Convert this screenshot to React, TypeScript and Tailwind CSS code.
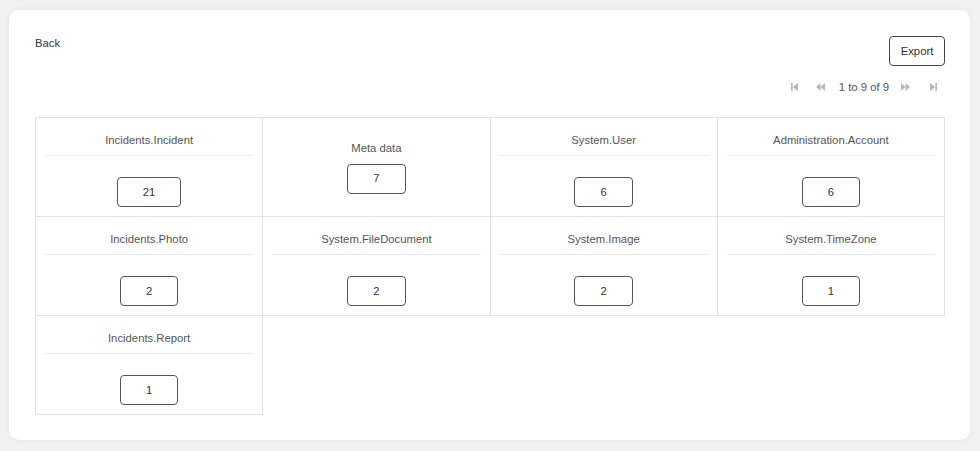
import React from 'react';

interface Stat {
  name: string;
  count: number;
  plain?: boolean;
}

const stats: Stat[] = [
  { name: 'Incidents.Incident', count: 21 },
  { name: 'Meta data', count: 7, plain: true },
  { name: 'System.User', count: 6 },
  { name: 'Administration.Account', count: 6 },
  { name: 'Incidents.Photo', count: 2 },
  { name: 'System.FileDocument', count: 2 },
  { name: 'System.Image', count: 2 },
  { name: 'System.TimeZone', count: 1 },
  { name: 'Incidents.Report', count: 1 },
];

const PagerIcon = ({ kind }: { kind: 'first' | 'prev' | 'next' | 'last' }) => {
  if (kind === 'first') {
    return (
      <svg width="7" height="8" viewBox="0 0 7 8" className="fill-[#b8b8b8]">
        <rect x="0" y="0" width="1.6" height="8" />
        <path d="M7 0 L1.6 4 L7 8 Z" />
      </svg>
    );
  }
  if (kind === 'last') {
    return (
      <svg width="7" height="8" viewBox="0 0 7 8" className="fill-[#b8b8b8]">
        <path d="M0 0 L5.4 4 L0 8 Z" />
        <rect x="5.4" y="0" width="1.6" height="8" />
      </svg>
    );
  }
  if (kind === 'prev') {
    return (
      <svg width="9" height="8" viewBox="0 0 9 8" className="fill-[#b8b8b8]">
        <path d="M4.5 0 L0 4 L4.5 8 Z" />
        <path d="M9 0 L4.5 4 L9 8 Z" />
      </svg>
    );
  }
  return (
    <svg width="9" height="8" viewBox="0 0 9 8" className="fill-[#b8b8b8]">
      <path d="M0 0 L4.5 4 L0 8 Z" />
      <path d="M4.5 0 L9 4 L4.5 8 Z" />
    </svg>
  );
};

const CountBox = ({ count }: { count: number }) => (
  <div className="h-[30px] px-[25px] flex items-center justify-center border border-[#555] rounded-[4px] text-[#333]">
    {count}
  </div>
);

function StatCell({ stat }: { stat: Stat }) {
  if (stat.plain) {
    return (
      <div className="h-[99px] border-r border-b border-[#e2e2e2] flex flex-col items-center justify-center">
        <div className="leading-[14px] text-[#555]">{stat.name}</div>
        <div className="mt-[9px]">
          <CountBox count={stat.count} />
        </div>
      </div>
    );
  }
  return (
    <div className="h-[99px] border-r border-b border-[#e2e2e2] flex flex-col items-center pt-[15px] px-[9px]">
      <div className="leading-[14px] text-[#555]">{stat.name}</div>
      <div className="w-full h-px bg-[#ececec] mt-[8px]" />
      <div className="mt-[21px]">
        <CountBox count={stat.count} />
      </div>
    </div>
  );
}

export default function App() {
  return (
    <div className="min-h-[451px] bg-[#f2f2f3] pt-[10px] pl-[9px] pr-[10px] pb-[12px] font-['Liberation_Sans',Arial,sans-serif] text-[11.3px]">
      <div className="bg-white rounded-[10px] shadow-[0_0_6px_rgba(0,0,0,0.06)] pl-[26px] pr-[25px] pt-[26px] pb-[25px]">
        <div className="flex justify-between items-start">
          <button className="text-[#333] leading-[13px] pt-[1px]">Back</button>
          <button className="h-[30px] w-[56px] border border-[#444] rounded-[4px] text-[#333]">Export</button>
        </div>
        <div className="flex justify-end items-center h-[20px] mt-[11px] mb-[20px] pr-[8px] text-[#555]">
          <PagerIcon kind="first" />
          <span className="ml-[18px]"><PagerIcon kind="prev" /></span>
          <span className="ml-[14px]">1 to 9 of 9</span>
          <span className="ml-[12px]"><PagerIcon kind="next" /></span>
          <span className="ml-[20px]"><PagerIcon kind="last" /></span>
        </div>
        <div className="grid grid-cols-4 border-l border-t border-[#e2e2e2] w-full">
          {stats.map((s) => (
            <StatCell key={s.name} stat={s} />
          ))}
        </div>
      </div>
    </div>
  );
}
